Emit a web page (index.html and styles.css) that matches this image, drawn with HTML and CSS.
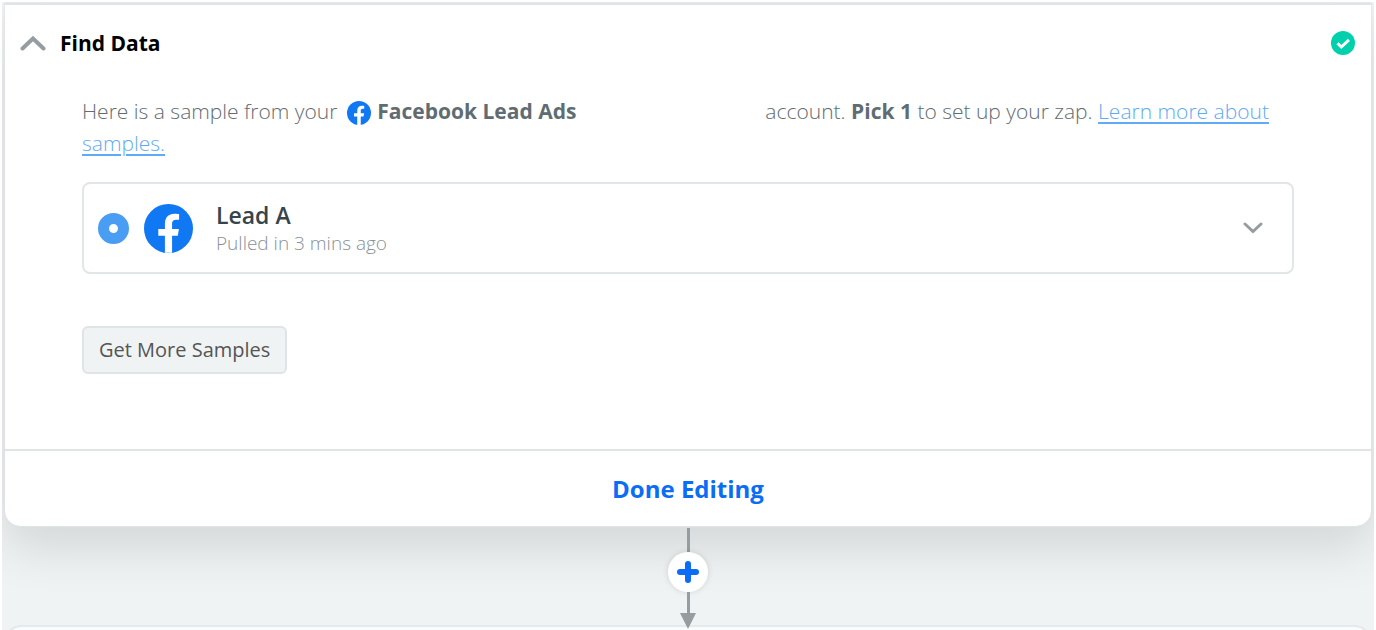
FILE: index.html
```html
<!DOCTYPE html>
<html lang="en">
<head>
<meta charset="utf-8">
<title>Find Data</title>
<link rel="stylesheet" href="styles.css">
</head>
<body>
<svg class="sprite" aria-hidden="true">
  <symbol id="facebook" viewBox="0 0 48 48">
    <circle cx="24" cy="24" r="24" fill="#0f78f2"/>
    <path fill="#fff" d="M20.500 47.800V31H14v-6.500h6.500v-5.300c0-6.300 3.700-9.700 9.300-9.700 2.200 0 4.600.4 4.600.4v5.600h-2.700c-3 0-4.200 1.700-4.200 3.600v5.400h6.700L33.100 31h-5.600v16.800z"/>
  </symbol>
</svg>
<main class="canvas">
  <section class="step">
    <header class="step-header">
      <button class="icon-button" type="button" aria-label="Collapse">
        <svg class="collapse-icon" viewBox="0 0 26 16"><path d="M2.500 13.500 13 3.500l10.500 10"/></svg>
      </button>
      <h2 class="step-title">Find Data</h2>
      <svg class="status-icon" viewBox="0 0 24 24" role="img" aria-label="Complete"><circle cx="12" cy="12" r="12" fill="#00d0ab"/><path d="m6.500 12.200 3.800 3.800 7.600-7.200" fill="none" stroke="#fff" stroke-width="3"/></svg>
    </header>
    <div class="step-body">
      <p class="intro">Here is a sample from your <svg class="inline-logo" aria-hidden="true"><use href="#facebook"/></svg> <strong>Facebook Lead Ads</strong> <span class="account-name"></span> account. <strong>Pick 1</strong> to set up your zap. <a class="help-link" href="#samples">Learn more about samples.</a></p>
      <div class="sample">
        <input class="sample-radio" type="radio" id="lead-a" name="sample" checked>
        <svg class="sample-logo" aria-hidden="true"><use href="#facebook"/></svg>
        <label class="sample-label" for="lead-a">
          <span class="sample-name">Lead A</span>
          <span class="sample-time">Pulled in 3 mins ago</span>
        </label>
        <button class="icon-button" type="button" aria-label="Show sample">
          <svg class="expand-icon" viewBox="0 0 20 12"><path d="m2 2 8 7.500L18 2"/></svg>
        </button>
      </div>
      <button class="more-button" type="button">Get More Samples</button>
    </div>
    <footer class="step-footer">
      <button class="done-button" type="button">Done Editing</button>
    </footer>
  </section>
  <div class="connector">
    <span class="line line-top"></span>
    <button class="add-button" type="button" aria-label="Add step">
      <svg class="add-icon" viewBox="0 0 22 22"><path d="M11 3v16M3 11h16"/></svg>
    </button>
    <span class="line line-bottom"></span>
    <svg class="arrow" viewBox="0 0 16 16"><path d="M0 0h16L8 16z"/></svg>
  </div>
  <section class="next-step" aria-label="Next step"></section>
</main>
</body>
</html>
```
FILE: styles.css
```css
* {
  box-sizing: border-box;
}

body {
  margin: 0;
  background: #fff;
  font-family: "Open Sans", "Noto Sans", sans-serif;
  color: #5f6c72;
}

button {
  font: inherit;
  cursor: pointer;
}

.sprite {
  display: none;
}

.canvas {
  display: flex;
  flex-direction: column;
  height: calc(100vh - 2px);
  margin: 2px 2px 0;
  padding: 1px 3px 0;
  overflow: hidden;
  background: #eff3f4;
}

.step {
  flex: none;
  border-top: 2px solid #dfe4e7;
  border-bottom: 1px solid #dfe4e7;
  border-radius: 0 0 16px 16px;
  background: #fff;
  box-shadow: 0 0 3px #d9dfe3, 0 20px 50px rgba(0, 0, 0, 0.12);
}

.step-header {
  display: flex;
  align-items: center;
  gap: 14px;
  padding: 22px 16px 20px 15px;
}

.icon-button {
  display: flex;
  padding: 0;
  border: 0;
  background: none;
}

.collapse-icon,
.expand-icon {
  fill: none;
  stroke: #959da1;
  stroke-width: 4;
  stroke-linecap: round;
}

.collapse-icon {
  width: 26px;
  height: 16px;
}

.expand-icon {
  width: 20px;
  height: 12px;
  stroke-width: 3;
}

.step-title {
  flex: 1;
  margin: 0;
  font-size: 21px;
  line-height: 32px;
  font-weight: 700;
  color: #000;
}

.status-icon {
  width: 24px;
  height: 24px;
}

.step-body {
  padding: 16px 77px 75px;
}

.intro {
  margin: 0 0 23px;
  font-size: 21px;
  line-height: 32px;
  font-weight: 300;
}

.intro strong {
  font-weight: 700;
}

.inline-logo {
  width: 24px;
  height: 24px;
  margin: 0 1px 0 4px;
  vertical-align: -6px;
}

.account-name {
  display: inline-block;
  width: 178px;
}

.help-link {
  color: #61aaf5;
  text-underline-offset: 3px;
}

.sample {
  display: flex;
  align-items: center;
  padding: 16px 29px 16px 14px;
  border: 2px solid #e1e6e9;
  border-radius: 8px;
}

.sample-radio {
  appearance: none;
  width: 31px;
  height: 31px;
  margin: 0 15px 0 0;
  border: 11px solid #499df3;
  border-radius: 50%;
  background: #fff;
}

.sample-logo {
  width: 49px;
  height: 49px;
  margin-right: 23px;
}

.sample-label {
  display: flex;
  flex: 1;
  flex-direction: column;
}

.sample-name {
  font-size: 23px;
  line-height: 30px;
  font-weight: 600;
  color: #36444b;
}

.sample-time {
  font-size: 19px;
  line-height: 26px;
  font-weight: 300;
  color: #879299;
}

.more-button {
  margin-top: 52px;
  padding: 8px 15px;
  border: 2px solid #dfe4e7;
  border-radius: 6px;
  background: #eff3f4;
  font-size: 20px;
  line-height: 28px;
  color: #555;
}

.step-footer {
  border-top: 2px solid #dfe4e7;
}

.done-button {
  display: block;
  width: 100%;
  padding: 21px 0 20px;
  border: 0;
  background: none;
  font-size: 24px;
  line-height: 34px;
  font-weight: 700;
  color: #0b6cf5;
}

.connector {
  display: flex;
  flex: none;
  flex-direction: column;
  align-items: center;
  padding-top: 1px;
}

.line {
  width: 3px;
  background: #959da1;
}

.line-top {
  height: 24px;
}

.line-bottom {
  height: 21px;
}

.add-button {
  display: flex;
  align-items: center;
  justify-content: center;
  width: 40px;
  height: 40px;
  padding: 0;
  border: 0;
  border-radius: 50%;
  background: #fff;
  box-shadow: 0 0 6px rgba(0, 0, 0, 0.12);
}

.add-icon {
  width: 22px;
  height: 22px;
  fill: none;
  stroke: #0b6cf5;
  stroke-width: 6;
  stroke-linecap: round;
}

.arrow {
  z-index: 1;
  width: 16px;
  height: 16px;
  margin-bottom: -4px;
  fill: #959da1;
}

.next-step {
  flex: none;
  height: 80px;
  border: 2px solid #e4e9eb;
  border-radius: 16px;
  background: #fafbfb;
}
```
